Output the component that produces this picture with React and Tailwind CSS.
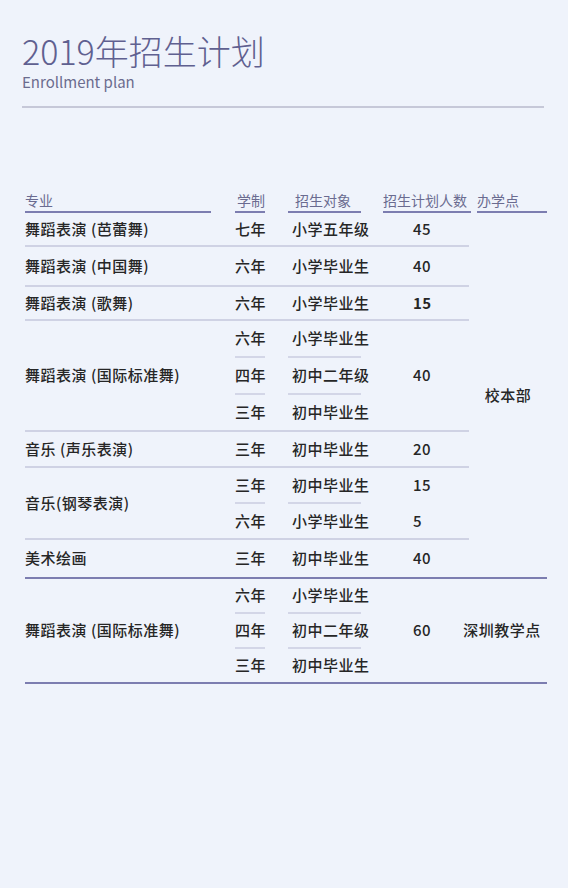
const FONT = { fontFamily: '"Noto Sans CJK SC", "Noto Sans", sans-serif' };

// 校本部 groups (heights exclude the 2px borders / sub-dividers)
const MAIN = [
  { major: '舞蹈表演 (芭蕾舞)', h: 'h-[32px]', subs: [['七年', '小学五年级']], n: '45' },
  { major: '舞蹈表演 (中国舞)', h: 'h-[38px]', subs: [['六年', '小学毕业生']], n: '40' },
  { major: '舞蹈表演 (歌舞)', h: 'h-[32px]', subs: [['六年', '小学毕业生']], n: '15', bold: true },
  {
    major: '舞蹈表演 (国际标准舞)', h: 'h-[35px]',
    subs: [['六年', '小学毕业生'], ['四年', '初中二年级'], ['三年', '初中毕业生']], n: '40',
  },
  { major: '音乐 (声乐表演)', h: 'h-[34px]', subs: [['三年', '初中毕业生']], n: '20' },
  { major: '音乐(钢琴表演)', h: 'h-[34px]', subs: [['三年', '初中毕业生', '15'], ['六年', '小学毕业生', '5']] },
  { major: '美术绘画', h: 'h-[37px]', subs: [['三年', '初中毕业生']], n: '40', last: true },
];

const SZ = [
  {
    major: '舞蹈表演 (国际标准舞)', h: 'h-[33px]',
    subs: [['六年', '小学毕业生'], ['四年', '初中二年级'], ['三年', '初中毕业生']], n: '60', last: true,
  },
];

function Group({ g }) {
  return (
    <div className={`flex ${g.last ? '' : 'border-b-2 border-[#cfd2e4]'}`}>
      <div className="w-[210px] flex items-center">{g.major}</div>
      <div className="flex flex-col">
        {g.subs.map((s, i) => (
          <div key={i} className="flex">
            <div className="w-[53px]">
              {i > 0 && <div className="w-[30px] h-[2px] bg-[#d3d6e7]" />}
              <div className={`${g.h} flex items-center`}>{s[0]}</div>
            </div>
            <div className="w-[95px]">
              {i > 0 && <div className="w-[73px] h-[2px] bg-[#d3d6e7]" />}
              <div className={`${g.h} flex items-center pl-[4px]`}>{s[1]}</div>
            </div>
            {s[2] && (
              <div className={`w-[86px] pl-[30px] flex items-center ${i > 0 ? 'pt-[2px]' : ''}`}>{s[2]}</div>
            )}
          </div>
        ))}
      </div>
      {g.n && (
        <div className={`w-[86px] pl-[30px] flex items-center ${g.bold ? 'font-bold' : ''}`}>{g.n}</div>
      )}
    </div>
  );
}

export default function App() {
  return (
    <div className="w-[568px] h-[888px] bg-[#eff3fb] pl-[22px] pt-[33px]" style={FONT}>
      <h1 className="text-[34px] leading-[36px] text-[#5f6090] font-light">2019年招生计划</h1>
      <p className="mt-[3px] text-[15px] leading-[20px] text-[#6b6c8e]">Enrollment plan</p>
      <div className="mt-[14px] w-[522px] h-[2px] bg-[#c6c8d8]" />

      <div className="ml-[3px] w-[522px] mt-[82px]">
        {/* header */}
        <div className="flex text-[14px] leading-[20px] text-[#6a6b90]">
          <div className="w-[210px]">
            <div>专业</div>
            <div className="mt-[1px] w-[186px] h-[2px] bg-[#7c7db0]" />
          </div>
          <div className="w-[53px]">
            <div className="pl-[2px]">学制</div>
            <div className="mt-[1px] w-[30px] h-[2px] bg-[#7c7db0]" />
          </div>
          <div className="w-[95px]">
            <div className="pl-[7px]">招生对象</div>
            <div className="mt-[1px] w-[73px] h-[2px] bg-[#7c7db0]" />
          </div>
          <div className="w-[94px]">
            <div>招生计划人数</div>
            <div className="mt-[1px] w-[88px] h-[2px] bg-[#7c7db0]" />
          </div>
          <div className="w-[70px]">
            <div>办学点</div>
            <div className="mt-[1px] w-[70px] h-[2px] bg-[#7c7db0]" />
          </div>
        </div>

        {/* 校本部 */}
        <div className="flex text-[15px] tracking-[0.5px] text-[#262626] font-medium border-b-2 border-[#7c7db0]">
          <div className="w-[444px]">
            {MAIN.map((g, i) => <Group key={i} g={g} />)}
          </div>
          <div className="w-[78px] flex items-center justify-center">校本部</div>
        </div>

        {/* 深圳教学点 */}
        <div className="flex text-[15px] tracking-[0.5px] text-[#262626] font-medium border-b-2 border-[#7c7db0]">
          <div className="w-[444px]">
            {SZ.map((g, i) => <Group key={i} g={g} />)}
          </div>
          <div className="w-[78px] flex items-center justify-center pr-[12px] whitespace-nowrap">深圳教学点</div>
        </div>
      </div>
    </div>
  );
}
